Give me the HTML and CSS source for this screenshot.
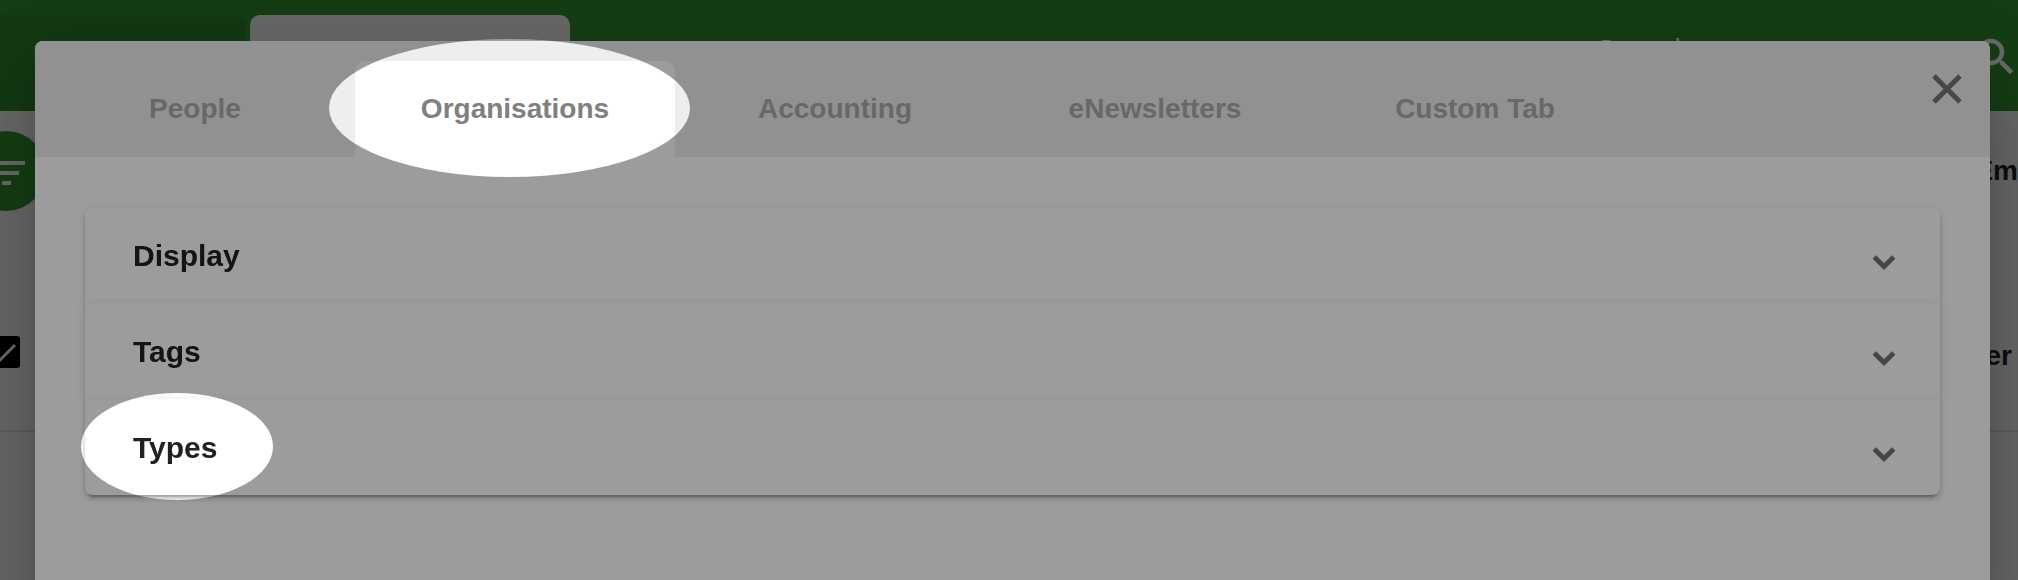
FILE: index.html
```
<!DOCTYPE html>
<html lang="en">

	<head>
		<meta charset="UTF-8">
		<title>Settings</title>
		<link rel="stylesheet" href="styles.css">
	</head>

	<body>
		<!-- page behind the dialog -->
		<div class="page">
			<header class="topbar">
				<div class="page-tab"></div>
				<div class="page-tab current"></div>
				<div class="search">
					<span>Search</span>
					<svg viewBox="0 0 24 24"><path d="M15.5 14h-.79l-.28-.27A6.47 6.47 0 0 0 16 9.5 6.5 6.5 0 1 0 9.5 16c1.61 0 3.09-.59 4.23-1.57l.27.28v.79l5 4.99L20.49 19l-4.99-5zm-6 0C7.01 14 5 11.99 5 9.5S7.01 5 9.5 5 14 7.01 14 9.5 11.99 14 9.5 14z"/></svg>
				</div>
			</header>
			<div class="list-head">
				<button class="filter" aria-label="Filter">
					<svg viewBox="0 0 48 48"><path d="M6 12h37v4H6zM12 22h25v4H12zM20 32h9v4h-9z"/></svg>
				</button>
				<span class="col">Em</span>
			</div>
			<div class="list-row">
				<svg class="check" viewBox="0 0 32 32"><rect width="32" height="32" rx="3"/><path d="M5 17l7 7L27 9"/></svg>
				<span class="cell">er</span>
			</div>
		</div>

		<div class="backdrop">
			<div class="dialog" role="dialog" aria-label="Settings">
				<div class="tabs">
					<div class="tab-list" role="tablist">
						<button class="tab" role="tab">People</button>
						<button class="tab active" role="tab" aria-selected="true">Organisations</button>
						<button class="tab" role="tab">Accounting</button>
						<button class="tab" role="tab">eNewsletters</button>
						<button class="tab" role="tab">Custom Tab</button>
					</div>
					<button class="close" aria-label="Close">
						<svg viewBox="0 0 50 50"><path d="M12 12l26 26M38 12L12 38"/></svg>
					</button>
				</div>
				<div class="panels">
					<button class="panel" aria-expanded="false">
						<span>Display</span>
						<svg class="arrow" viewBox="0 0 24 32"><path d="M2.3 17l9.7 9.5 9.7-9.5"/></svg>
					</button>
					<button class="panel" aria-expanded="false">
						<span>Tags</span>
						<svg class="arrow" viewBox="0 0 24 32"><path d="M2.3 17l9.7 9.5 9.7-9.5"/></svg>
					</button>
					<button class="panel" aria-expanded="false">
						<span>Types</span>
						<svg class="arrow" viewBox="0 0 24 32"><path d="M2.3 17l9.7 9.5 9.7-9.5"/></svg>
					</button>
				</div>
			</div>
		</div>

		<!-- dark layer with two spotlights cut out -->
		<svg class="dim">
			<mask id="spots">
				<rect width="100%" height="100%" fill="#fff"/>
				<ellipse cx="509.5" cy="108" rx="180.5" ry="69"/>
				<ellipse cx="177" cy="446.5" rx="96" ry="53.5"/>
			</mask>
			<rect width="100%" height="100%" mask="url(#spots)"/>
		</svg>
	</body>

</html>
```
FILE: styles.css
```
* {
	box-sizing: border-box;
}

body {
	margin: 0;
	font-family: "Liberation Sans", Arial, sans-serif;
	overflow: hidden;
}

button {
	border: 0;
	padding: 0;
	background: none;
	font-family: inherit;
	cursor: pointer;
}

/* page */
.page {
	min-height: 100vh;
	background: #fafafa;
	overflow: hidden;
}

.topbar {
	display: flex;
	gap: 4px;
	height: 111px;
	padding-top: 15px;
	background: #339433;
}

.page-tab {
	width: 246px;
	border-radius: 0 10px 0 0;
	background: #2f882f;
}

.page-tab.current {
	width: 320px;
	border-radius: 10px 10px 0 0;
	background: #fafafa;
}

.search {
	display: flex;
	align-items: flex-start;
	justify-content: space-between;
	width: 424px;
	margin: 0 -2px 0 auto;
	padding: 18px 0 0;
	color: #fff;
	font-size: 30px;
	line-height: 34px;
}

.search svg {
	width: 48px;
	height: 48px;
	fill: #fff;
	stroke: #fff;
	stroke-width: .3;
}

.list-head {
	display: flex;
	align-items: center;
	justify-content: space-between;
	height: 120px;
}

.filter {
	display: flex;
	align-items: center;
	justify-content: center;
	width: 80px;
	height: 80px;
	padding-top: 4px;
	margin-left: -34px;
	border-radius: 50%;
	background: #339433;
}

.filter svg {
	width: 48px;
	height: 48px;
	fill: #fff;
}

.col,
.cell {
	font-size: 28px;
	font-weight: bold;
	color: #222;
}

.list-row {
	display: flex;
	align-items: flex-start;
	justify-content: space-between;
	height: 201px;
	padding: 105px 6px 0 0;
	border-bottom: 2px solid #e0e0e0;
}

.cell {
	line-height: 40px;
}

.check {
	width: 32px;
	height: 32px;
	margin-left: -12px;
}

.check path {
	fill: none;
	stroke: #fff;
	stroke-width: 3;
}

/* dialog */
.backdrop {
	position: fixed;
	inset: 0;
	padding: 41px 28px 0 35px;
	background: rgba(0, 0, 0, .32);
}

.dialog {
	height: 100vh;
	border-radius: 8px 8px 0 0;
	background: #fff;
	box-shadow: 0 22px 30px -14px rgba(0, 0, 0, .2), 0 48px 76px 6px rgba(0, 0, 0, .14), 0 18px 92px 16px rgba(0, 0, 0, .12);
}

.tabs {
	display: flex;
	justify-content: space-between;
	align-items: flex-start;
	padding: 20px 18px 0 0;
	border-radius: 8px 8px 0 0;
	background: #eee;
}

.tab-list {
	display: flex;
}

.tab {
	width: 320px;
	height: 96px;
	border-radius: 10px 10px 0 0;
	font-size: 28px;
	font-weight: bold;
	color: #ababab;
}

.tab.active {
	background: #fff;
	color: #808080;
}

.close {
	width: 50px;
	height: 50px;
	margin-top: 3px;
}

.close svg {
	display: block;
	stroke: #757575;
	stroke-width: 5;
}

.panels {
	margin: 50px;
}

.panel {
	display: flex;
	align-items: center;
	justify-content: space-between;
	width: 100%;
	height: 96px;
	padding: 2px 44px 0 48px;
	background: #fff;
	box-shadow: 0 6px 2px -4px rgba(0, 0, 0, .2), 0 4px 4px rgba(0, 0, 0, .14), 0 2px 10px rgba(0, 0, 0, .12);
	font-size: 30px;
	font-weight: bold;
	color: #212121;
}

.panel:first-child {
	border-radius: 8px 8px 0 0;
}

.panel:last-child {
	border-radius: 0 0 8px 8px;
}

.arrow {
	width: 24px;
	height: 32px;
	fill: none;
	stroke: #757575;
	stroke-width: 5;
}

.dim {
	position: fixed;
	inset: 0;
	width: 100%;
	height: 100%;
	fill-opacity: .39;
	pointer-events: none;
}

.dim mask {
	fill-opacity: 1;
}
```
